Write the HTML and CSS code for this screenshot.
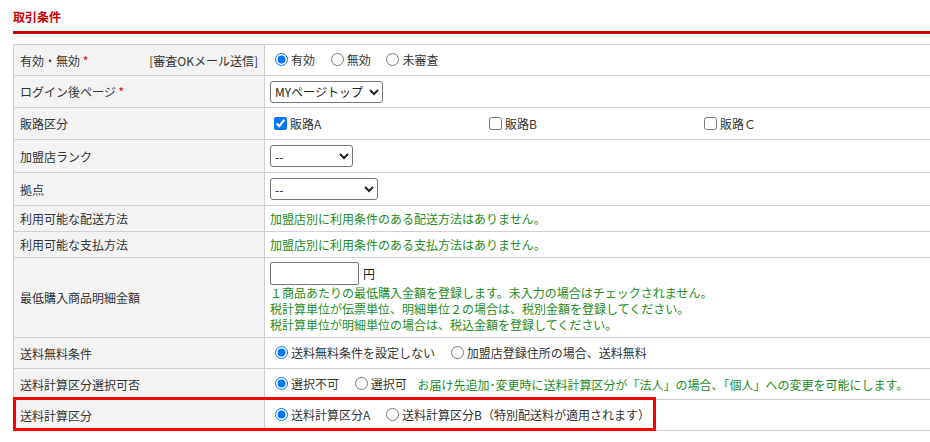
FILE: index.html
```html
<!DOCTYPE html>
<html lang="ja">
<head>
<meta charset="utf-8">
<link rel="stylesheet" href="styles.css">
</head>
<body>
<div class="page">
  <h2 class="title">取引条件</h2>
  <div class="table-wrap">
    <table class="form">
      <tr class="h31">
        <th><div class="th-split"><span>有効・無効 <span class="req">*</span></span><span>[審査OKメール送信]</span></div></th>
        <td>
          <label class="opt"><input type="radio" name="valid" checked>有効</label>
          <label class="opt"><input type="radio" name="valid">無効</label>
          <label class="opt"><input type="radio" name="valid">未審査</label>
        </td>
      </tr>
      <tr class="h32">
        <th>ログイン後ページ <span class="req">*</span></th>
        <td><select class="sel sel-my"><option>MYページトップ</option></select></td>
      </tr>
      <tr class="h32">
        <th>販路区分</th>
        <td>
          <label class="chk"><input type="checkbox" checked>販路A</label><label class="chk"><input type="checkbox">販路B</label><label class="chk"><input type="checkbox">販路Ｃ</label>
        </td>
      </tr>
      <tr class="h33">
        <th>加盟店ランク</th>
        <td><select class="sel sel-rank"><option>--</option></select></td>
      </tr>
      <tr class="h33">
        <th>拠点</th>
        <td><select class="sel sel-base"><option>--</option></select></td>
      </tr>
      <tr class="h26">
        <th>利用可能な配送方法</th>
        <td class="note">加盟店別に利用条件のある配送方法はありません。</td>
      </tr>
      <tr class="h26">
        <th>利用可能な支払方法</th>
        <td class="note">加盟店別に利用条件のある支払方法はありません。</td>
      </tr>
      <tr class="h80">
        <th>最低購入商品明細金額</th>
        <td class="amount">
          <div class="amount-row"><input type="text" class="txt"><span class="yen">円</span></div>
          <div class="note lines">
            <div>１商品あたりの最低購入金額を登録します。未入力の場合はチェックされません。</div>
            <div>税計算単位が伝票単位、明細単位２の場合は、税別金額を登録してください。</div>
            <div>税計算単位が明細単位の場合は、税込金額を登録してください。</div>
          </div>
        </td>
      </tr>
      <tr class="h31">
        <th>送料無料条件</th>
        <td>
          <label class="opt"><input type="radio" name="free" checked>送料無料条件を設定しない</label>
          <label class="opt"><input type="radio" name="free">加盟店登録住所の場合、送料無料</label>
        </td>
      </tr>
      <tr class="h31">
        <th>送料計算区分選択可否</th>
        <td>
          <label class="opt"><input type="radio" name="sel" checked>選択不可</label>
          <label class="opt"><input type="radio" name="sel">選択可</label>
          <span class="note">お届け先追加･変更時に送料計算区分が「法人」の場合、「個人」への変更を可能にします。</span>
        </td>
      </tr>
      <tr class="h31">
        <th>送料計算区分</th>
        <td>
          <label class="opt"><input type="radio" name="calc" checked>送料計算区分A</label>
          <label class="opt"><input type="radio" name="calc">送料計算区分B（特別配送料が適用されます）</label>
        </td>
      </tr>
    </table>
    <div class="highlight"></div>
  </div>
</div>
</body>
</html>
```

FILE: styles.css
```css
html, body {
  margin: 0;
  padding: 0;
  overflow: hidden;
  background: #fff;
}
body {
  font-family: "Noto Sans CJK JP", "Noto Sans", sans-serif;
  font-size: 12px;
  color: #333;
}
.page {
  padding-left: 13px;
  width: 960px;
}
.title {
  margin: 0;
  padding-top: 9px;
  padding-bottom: 6px;
  line-height: 16px;
  font-size: 12px;
  font-weight: bold;
  color: #cc0000;
  border-bottom: 3px solid #cc0000;
}
.table-wrap {
  position: relative;
  margin-top: 10px;
}
.form {
  border-collapse: collapse;
  width: 940px;
}
.form th, .form td {
  border: 1px solid #d0d0d0;
  padding: 0 5px;
  vertical-align: middle;
  line-height: 15px;
}
.form th {
  width: 238px;
  background: #f2f3f2;
  font-weight: normal;
  text-align: left;
  padding-left: 6px;
  padding-right: 6px;
}
.th-split {
  display: flex;
  justify-content: space-between;
}
.req {
  color: #e00;
}
.h31 { height: 31px; }
.h32 { height: 32px; }
.h33 { height: 33px; }
.h26 { height: 26px; }
.h80 { height: 80px; }
.opt {
  display: inline-flex;
  align-items: center;
  margin-right: 8px;
}
.opt input {
  margin: 0 3px 0 5px;
  width: 13px;
  height: 13px;
}
.chk {
  display: inline-flex;
  align-items: center;
  width: 215px;
}
.chk input {
  margin: 0 3px 0 4px;
  width: 13px;
  height: 13px;
}
.sel {
  font-family: "Noto Sans CJK JP", "Noto Sans", sans-serif;
  font-size: 12px;
  height: 22px;
  color: #222;
  border: 1px solid #767676;
  border-radius: 3px;
  background: #fff;
  vertical-align: middle;
}
.sel-my { width: 113px; }
.sel-rank { width: 83px; }
.sel-base { width: 108px; }
.note {
  color: #1e8c1e;
}
.amount {
  padding-top: 4px;
  padding-bottom: 4px;
}
.amount-row {
  display: flex;
  align-items: center;
  gap: 4px;
}
.txt {
  width: 89px;
  height: 23px;
  box-sizing: border-box;
  border: 1px solid #767676;
  border-radius: 2px;
  margin: 0;
  padding: 0 2px;
}
.yen {
  color: #222;
}
.lines {
  line-height: 16px;
}
.highlight {
  position: absolute;
  left: 0;
  top: 353px;
  width: 643px;
  height: 34px;
  box-sizing: border-box;
  border: 3px solid #ff0000;
  pointer-events: none;
}
```
